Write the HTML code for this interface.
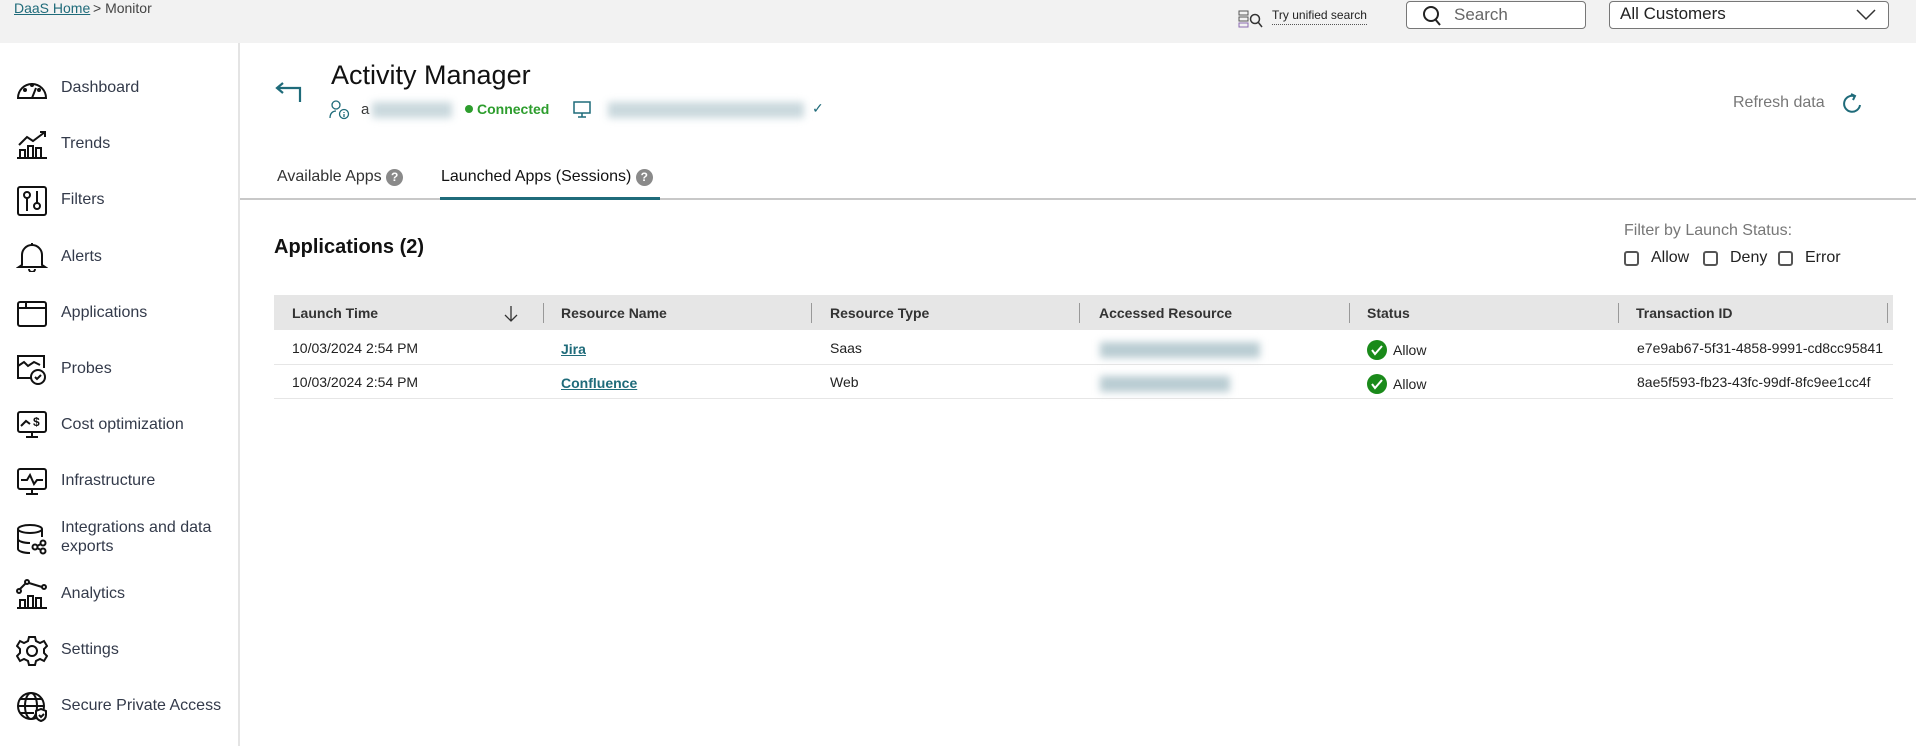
<!DOCTYPE html>
<html><head><meta charset="utf-8"><style>
*{box-sizing:border-box;margin:0;padding:0}
body{width:1916px;height:746px;overflow:hidden;background:#fff;font-family:"Liberation Sans",sans-serif;color:#222;position:relative}
.a{position:absolute;white-space:nowrap}
.top{left:0;top:0;width:1916px;height:43px;background:#f2f2f2}
.side{left:0;top:43px;width:240px;height:703px;border-right:2px solid #e4e4e4}
.nav{left:61px;font-size:16px;color:#333a4a}
.ic{left:16px}
.th{font-size:14px;font-weight:bold;color:#333;top:305px}
.td{font-size:14px;color:#222}
.sep{width:1px;height:20px;background:#999;top:303px}
.cb{width:15px;height:15px;border:2px solid #555;border-radius:3px;top:251px}
.q{display:inline-block;width:17px;height:17px;border-radius:50%;background:#8a8a8a;color:#fff;font-size:12px;font-weight:bold;text-align:center;line-height:17px}
.blur{background:#c9d8dd;filter:blur(4px);height:16px}
</style></head><body>
<div class="a top"></div>
<div class="a" style="left:14px;top:0px;font-size:14px;color:#1f6b7a;text-decoration:underline">DaaS Home</div>
<div class="a" style="left:93px;top:0px;font-size:14px;color:#444">&gt; Monitor</div>
<svg class="a" style="left:1238px;top:9px" width="26" height="20" viewBox="0 0 26 20"><rect x="1" y="2" width="9" height="4" fill="none" stroke="#555"/><rect x="1" y="8" width="9" height="4" fill="none" stroke="#555"/><rect x="1" y="14" width="9" height="4" fill="none" stroke="#8a6ab0"/><circle cx="17" cy="10" r="4.5" fill="none" stroke="#333" stroke-width="1.5"/><path d="M20 13l4 5" stroke="#333" stroke-width="1.5"/></svg>
<div class="a" style="left:1272px;top:8px;font-size:12px;color:#222;border-bottom:1px dotted #555;padding-bottom:2px">Try unified search</div>
<div class="a" style="left:1406px;top:1px;width:180px;height:28px;border:1px solid #777;border-radius:4px;background:#fff"></div>
<svg class="a" style="left:1422px;top:5px" width="20" height="22"><circle cx="9" cy="9" r="7" fill="none" stroke="#222" stroke-width="2"/><path d="M13 14l5 6" stroke="#222" stroke-width="2"/></svg>
<div class="a" style="left:1454px;top:5px;font-size:17px;color:#666">Search</div>
<div class="a" style="left:1609px;top:1px;width:280px;height:28px;border:1px solid #777;border-radius:4px;background:#fff"></div>
<div class="a" style="left:1620px;top:4px;font-size:17px;color:#222">All Customers</div>
<svg class="a" style="left:1856px;top:8px" width="20" height="14"><path d="M1 2l9 9 9-9" fill="none" stroke="#333" stroke-width="1.5"/></svg>

<div class="a side"></div>
<svg class="a ic" style="top:76px" width="32" height="26" viewBox="0 0 32 26" fill="none" stroke="#111" stroke-width="2"><path d="M2 22a14 14 0 1 1 28 0z"/><path d="M16 22l4-10"/><circle cx="9" cy="14" r="1" fill="#111"/><circle cx="16" cy="9" r="1" fill="#111"/><circle cx="23" cy="14" r="1" fill="#111"/></svg>
<div class="a nav" style="top:79px">Dashboard</div>
<svg class="a ic" style="top:130px" width="32" height="30" viewBox="0 0 32 30" fill="none" stroke="#111" stroke-width="2"><path d="M1 28h30M4 28v-8h5v8M12 28v-12h5v12M20 28v-10h5v10M3 15l8-8 6 4 12-9M24 2h5v5"/></svg>
<div class="a nav" style="top:135px">Trends</div>
<svg class="a ic" style="top:185px" width="32" height="32" viewBox="0 0 32 32" fill="none" stroke="#111" stroke-width="2"><rect x="2" y="2" width="28" height="28" rx="2"/><circle cx="11" cy="10" r="3"/><path d="M11 13v13M21 6v13"/><circle cx="21" cy="21" r="3"/></svg>
<div class="a nav" style="top:191px">Filters</div>
<svg class="a ic" style="top:242px" width="32" height="30" viewBox="0 0 32 30" fill="none" stroke="#111" stroke-width="2"><path d="M6 23V13a10 10 0 0 1 20 0v10l3 2H3z M16 3V1M13 27a3 3 0 0 0 6 0"/></svg>
<div class="a nav" style="top:248px">Alerts</div>
<svg class="a ic" style="top:300px" width="32" height="28" viewBox="0 0 32 28" fill="none" stroke="#111" stroke-width="2"><rect x="2" y="2" width="28" height="24" rx="2"/><path d="M2 8h28M10 2v6"/></svg>
<div class="a nav" style="top:304px">Applications</div>
<svg class="a ic" style="top:354px" width="32" height="32" viewBox="0 0 32 32" fill="none" stroke="#111" stroke-width="2"><path d="M16 24H2V2h26v12M2 12l6-4 4 4 6-4 6 3"/><circle cx="22" cy="23" r="7"/><path d="M19 23l2 2 4-4"/></svg>
<div class="a nav" style="top:360px">Probes</div>
<svg class="a ic" style="top:410px" width="32" height="30" viewBox="0 0 32 30" fill="none" stroke="#111" stroke-width="2"><rect x="2" y="2" width="28" height="20" rx="2"/><path d="M10 27h12M16 22v5M5 16l5-5 4 3"/><text x="17" y="16" font-size="12" font-family="Liberation Sans" fill="#111" stroke="none" font-weight="bold">$</text></svg>
<div class="a nav" style="top:416px">Cost optimization</div>
<svg class="a ic" style="top:467px" width="32" height="30" viewBox="0 0 32 30" fill="none" stroke="#111" stroke-width="2"><rect x="2" y="2" width="28" height="20" rx="2"/><path d="M10 27h12M16 22v5M5 13h6l3-5 4 9 3-4h6"/></svg>
<div class="a nav" style="top:472px">Infrastructure</div>
<svg class="a ic" style="top:523px" width="32" height="32" viewBox="0 0 32 32" fill="none" stroke="#111" stroke-width="2"><ellipse cx="14" cy="6" rx="12" ry="4"/><path d="M2 6v20c0 2 5 4 12 4M2 16c0 2 5 4 12 4M26 6v8"/><circle cx="19" cy="24" r="2.5"/><circle cx="27" cy="20" r="2.5"/><circle cx="27" cy="28" r="2.5"/><path d="M21 23l4-2M21 25l4 2"/></svg>
<div class="a nav" style="top:518px;line-height:19px">Integrations and data<br>exports</div>
<svg class="a ic" style="top:578px" width="32" height="32" viewBox="0 0 32 32" fill="none" stroke="#111" stroke-width="2"><path d="M1 30h30M4 30v-8h5v8M12 30v-12h5v12M20 30v-10h5v10"/><circle cx="3" cy="13" r="2"/><circle cx="11" cy="4" r="2"/><circle cx="28" cy="9" r="2"/><path d="M4 11l6-6M13 5l13 4"/></svg>
<div class="a nav" style="top:585px">Analytics</div>
<svg class="a ic" style="top:635px" width="32" height="32" viewBox="0 0 32 32" fill="none" stroke="#111" stroke-width="2"><path d="M13 2h6l1 4 4 2 4-2 3 5-3 3v4l3 3-3 5-4-2-4 2-1 4h-6l-1-4-4-2-4 2-3-5 3-3v-4l-3-3 3-5 4 2 4-2z"/><circle cx="16" cy="16" r="5"/></svg>
<div class="a nav" style="top:641px">Settings</div>
<svg class="a ic" style="top:691px" width="32" height="32" viewBox="0 0 32 32" fill="none" stroke="#111" stroke-width="2"><circle cx="15" cy="15" r="13"/><ellipse cx="15" cy="15" rx="6" ry="13"/><path d="M2 15h26M4 8h22M4 22h14"/><path d="M20 20l5-2 5 2v4c0 3-2 5-5 6-3-1-5-3-5-6z" fill="#fff"/><path d="M23 24l2 2 3-3"/></svg>
<div class="a nav" style="top:697px">Secure Private Access</div>

<svg class="a" style="left:274px;top:82px" width="30" height="22" viewBox="0 0 30 22" fill="none" stroke="#1f6b7a" stroke-width="2.2"><path d="M26 20V6H3M9 1L3 6l6 5"/></svg>
<div class="a" style="left:331px;top:60px;font-size:27px;color:#111">Activity Manager</div>
<svg class="a" style="left:329px;top:100px" width="22" height="20" viewBox="0 0 22 20" fill="none" stroke="#1f6b7a" stroke-width="1.3"><circle cx="7" cy="5" r="4"/><path d="M1 18c0-5 3-7 6-7"/><circle cx="15" cy="14" r="4.5"/><path d="M15 12v1M15 14v3"/></svg>
<div class="a" style="left:361px;top:101px;font-size:15px;color:#333">a</div>
<div class="a blur" style="left:372px;top:102px;width:80px"></div>
<div class="a" style="left:465px;top:105px;width:8px;height:8px;border-radius:50%;background:#2d9d2d"></div>
<div class="a" style="left:477px;top:101px;font-size:14px;font-weight:bold;color:#2d9d2d">Connected</div>
<svg class="a" style="left:573px;top:101px" width="18" height="18" viewBox="0 0 18 18" fill="none" stroke="#1f6b7a" stroke-width="1.5"><rect x="1" y="1" width="16" height="11"/><path d="M9 12v4M5 16h8"/></svg>
<div class="a blur" style="left:608px;top:102px;width:196px"></div>
<div class="a" style="left:812px;top:100px;font-size:14px;color:#1f6b7a">✓</div>
<div class="a" style="left:1733px;top:94px;font-size:16px;color:#777">Refresh data</div>
<svg class="a" style="left:1842px;top:93px" width="20" height="22" viewBox="0 0 20 22" fill="none" stroke="#1f6b7a" stroke-width="2"><path d="M12 3a8 8 0 1 0 6 9"/><path d="M9 1l4 2-2 4"/></svg>

<div class="a" style="left:240px;top:198px;width:1676px;height:2px;background:#c8c8c8"></div>
<div class="a" style="left:440px;top:197px;width:220px;height:3px;background:#1f6b7a"></div>
<div class="a" style="left:277px;top:168px;font-size:16px;color:#333">Available Apps <span class="q">?</span></div>
<div class="a" style="left:441px;top:168px;font-size:16px;color:#111">Launched Apps (Sessions) <span class="q">?</span></div>

<div class="a" style="left:274px;top:236px;font-size:20px;font-weight:bold;color:#111">Applications (2)</div>
<div class="a" style="left:1624px;top:222px;font-size:16px;color:#777">Filter by Launch Status:</div>
<div class="a cb" style="left:1624px"></div><div class="a" style="left:1651px;top:249px;font-size:16px">Allow</div>
<div class="a cb" style="left:1703px"></div><div class="a" style="left:1730px;top:249px;font-size:16px">Deny</div>
<div class="a cb" style="left:1778px"></div><div class="a" style="left:1805px;top:249px;font-size:16px">Error</div>

<div class="a" style="left:274px;top:295px;width:1619px;height:35px;background:#e6e6e6"></div>
<div class="a th" style="left:292px">Launch Time</div>
<svg class="a" style="left:503px;top:305px" width="16" height="18"><path d="M8 1v15M2 10l6 6 6-6" fill="none" stroke="#333" stroke-width="1.3"/></svg>
<div class="a sep" style="left:543px"></div><div class="a th" style="left:561px">Resource Name</div>
<div class="a sep" style="left:811px"></div><div class="a th" style="left:830px">Resource Type</div>
<div class="a sep" style="left:1079px"></div><div class="a th" style="left:1099px">Accessed Resource</div>
<div class="a sep" style="left:1349px"></div><div class="a th" style="left:1367px">Status</div>
<div class="a sep" style="left:1618px"></div><div class="a th" style="left:1636px">Transaction ID</div>
<div class="a sep" style="left:1887px"></div>
<div class="a" style="left:274px;top:364px;width:1619px;height:1px;background:#e6e6e6"></div>
<div class="a" style="left:274px;top:398px;width:1619px;height:1px;background:#e6e6e6"></div>

<div class="a td" style="left:292px;top:340px">10/03/2024 2:54 PM</div>
<div class="a td" style="left:561px;top:341px;color:#1f6b7a;font-weight:bold;text-decoration:underline">Jira</div>
<div class="a td" style="left:830px;top:340px">Saas</div>
<div class="a blur" style="left:1100px;top:342px;width:160px;background:#b9ccd2"></div>
<svg class="a" style="left:1367px;top:340px" width="20" height="20"><circle cx="10" cy="10" r="10" fill="#1a8a1a"/><path d="M5 10l3 4 7-8" fill="none" stroke="#fff" stroke-width="2"/></svg>
<div class="a td" style="left:1393px;top:342px">Allow</div>
<div class="a td" style="left:1637px;top:340px;width:252px;overflow:hidden">e7e9ab67-5f31-4858-9991-cd8cc95841</div>

<div class="a td" style="left:292px;top:374px">10/03/2024 2:54 PM</div>
<div class="a td" style="left:561px;top:375px;color:#1f6b7a;font-weight:bold;text-decoration:underline">Confluence</div>
<div class="a td" style="left:830px;top:374px">Web</div>
<div class="a blur" style="left:1100px;top:376px;width:130px;background:#b9ccd2"></div>
<svg class="a" style="left:1367px;top:374px" width="20" height="20"><circle cx="10" cy="10" r="10" fill="#1a8a1a"/><path d="M5 10l3 4 7-8" fill="none" stroke="#fff" stroke-width="2"/></svg>
<div class="a td" style="left:1393px;top:376px">Allow</div>
<div class="a td" style="left:1637px;top:374px;width:252px;overflow:hidden">8ae5f593-fb23-43fc-99df-8fc9ee1cc4f</div>
</body></html>
